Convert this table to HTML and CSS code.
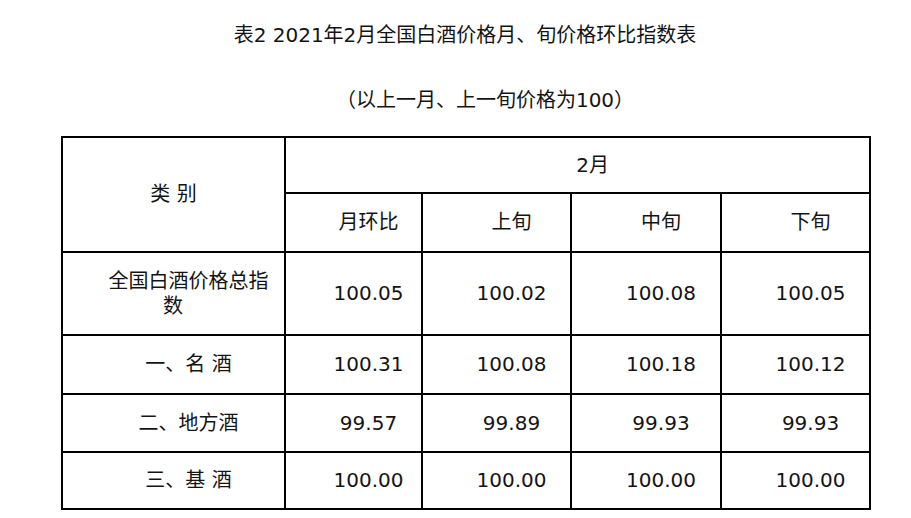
FILE: index.html
```html
<!DOCTYPE html>
<html lang="zh">
<head>
<meta charset="utf-8">
<title>表2 2021年2月全国白酒价格月、旬价格环比指数表</title>
<link rel="stylesheet" href="styles.css">
</head>
<body>
<div class="page">
  <h1 class="title">表2 2021年2月全国白酒价格月、旬价格环比指数表</h1>
  <p class="subtitle">（以上一月、上一旬价格为100）</p>
  <table class="index-table">
    <colgroup>
      <col class="c-cat">
      <col class="c-mom">
      <col class="c-a">
      <col class="c-b">
      <col class="c-c">
    </colgroup>
    <thead>
      <tr class="r-month">
        <th rowspan="2" class="cat-head">类 别</th>
        <th colspan="4">2月</th>
      </tr>
      <tr class="r-sub">
        <th>月环比</th>
        <th>上旬</th>
        <th>中旬</th>
        <th>下旬</th>
      </tr>
    </thead>
    <tbody>
      <tr class="r-total">
        <td class="cat">全国白酒价格总指<br><span class="tail">数</span></td>
        <td>100.05</td>
        <td>100.02</td>
        <td>100.08</td>
        <td>100.05</td>
      </tr>
      <tr class="r-a">
        <td class="cat">一、名 酒</td>
        <td>100.31</td>
        <td>100.08</td>
        <td>100.18</td>
        <td>100.12</td>
      </tr>
      <tr class="r-b">
        <td class="cat">二、地方酒</td>
        <td>99.57</td>
        <td>99.89</td>
        <td>99.93</td>
        <td>99.93</td>
      </tr>
      <tr class="r-c">
        <td class="cat">三、基 酒</td>
        <td>100.00</td>
        <td>100.00</td>
        <td>100.00</td>
        <td>100.00</td>
      </tr>
    </tbody>
  </table>
</div>
</body>
</html>
```
FILE: styles.css
```css
html, body {
  margin: 0;
  padding: 0;
  background: #fff;
}

body {
  font-family: "DejaVu Sans", "Noto Sans CJK SC", sans-serif;
  color: #141414;
  font-size: 20px;
}

.page {
  width: 808px;
  margin-left: 61px;
  padding-top: 21px;
}

.title {
  margin: 0;
  font-size: 20px;
  font-weight: normal;
  line-height: 28px;
  height: 28px;
  text-align: center;
}

.subtitle {
  margin: 37px 0 0;
  padding-left: 40px;
  line-height: 28px;
  height: 28px;
  text-align: center;
}

.index-table {
  margin-top: 22px;
  width: 808px;
  table-layout: fixed;
  border-collapse: collapse;
  border: 2px solid #000;
}

.c-cat { width: 223px; }
.c-mom { width: 137px; }
.c-a { width: 149px; }
.c-b { width: 150px; }
.c-c { width: 149px; }

.index-table th,
.index-table td {
  border: 2px solid #000;
  padding: 0 0 0 30px;
  text-align: center;
  vertical-align: middle;
  font-weight: normal;
  line-height: 25px;
}

.index-table th.cat-head {
  padding-left: 0;
}

.r-month { height: 56px; }
.r-sub { height: 59px; }
.r-total { height: 83px; }
.r-a { height: 59px; }
.r-b { height: 58px; }
.r-c { height: 57px; }

.tail {
  margin-right: 31px;
}
```
